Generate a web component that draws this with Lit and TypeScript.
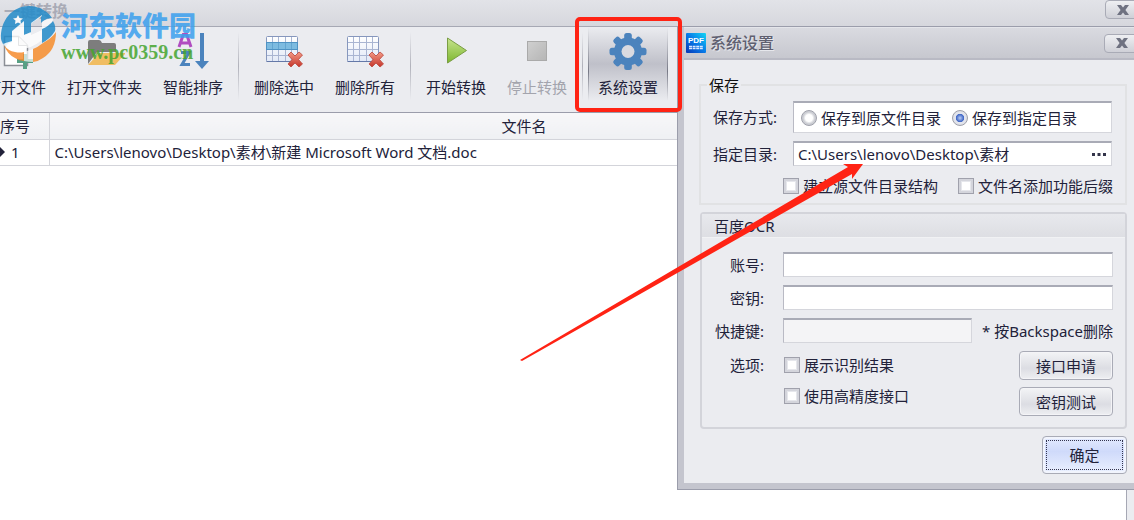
import { LitElement, html, css, svg } from "lit";
import { customElement } from "lit/decorators.js";

const fontStack = css`"Noto Sans", "Noto Sans CJK SC", sans-serif`;

const closeGlyph = html`<svg width="12" height="10" viewBox="0 0 12 10" aria-hidden="true">
  <path d="M0 0h4l2 2.6L8 0h4L8.4 5 12 10H8L6 7.4 4 10H0l3.6-5z" fill="#6f7281" />
</svg>`;

const grid = (selected: boolean) => html`<svg width="40" height="36" viewBox="0 0 40 36" aria-hidden="true">
  <defs>
    <linearGradient id="g" x2="0" y2="1"><stop stop-color="#fff" /><stop offset="1" stop-color="#e2e9f7" /></linearGradient>
    <linearGradient id="x" x2="0" y2="1"><stop stop-color="#f39a86" /><stop offset="1" stop-color="#c5352a" /></linearGradient>
  </defs>
  <rect x="2.5" y="3.5" width="31" height="25" rx="1" fill="url(#g)" stroke="#8697bd" />
  <path d="M8.500 4v24M14.500 4v24M21.500 4v24M27.500 4v24M3 9.500h30M3 16.500h30M3 22.500h30" stroke="#a9b5d2" />
  ${selected
    ? svg`<rect x="2.500" y="9.500" width="31" height="7" fill="#7dbbe0" stroke="#4f93c4"/><path d="M8.500 10v6M14.500 10v6M21.500 10v6M27.500 10v6" stroke="#63a5d0"/>`
    : ""}
  <path d="M2.500 28.500h31" stroke="#6478a8" />
  <path d="M24 22l3-3 4 4 4-4 3.500 3-4 4.500 4 4.500-3.500 3-4-4-4 4-3-3 4-4.500z" fill="url(#x)" stroke="#ba473d" stroke-width=".8" stroke-linejoin="round" />
</svg>`;

const icons = {
  file: html`<svg width="40" height="36" viewBox="0 0 40 36" aria-hidden="true">
    <path d="M8.500 3.500h14l9 9v20h-23z" fill="#fff" stroke="#8b8f96" stroke-width="1.500" />
    <path d="M22.500 3.500v9h9" fill="#eee" stroke="#8b8f96" />
    <path d="M21 26h16v4H21z" fill="#58a085" /><path d="M27 21h4v15h-4z" fill="#58a085" />
  </svg>`,
  folder: html`<svg width="40" height="36" viewBox="0 0 40 36" aria-hidden="true">
    <path d="M3 31V9q0-2 2-2h9q2 0 3 3h12q2 0 2 2v7H12z" fill="#7d7d7d" />
    <path d="M14 20h27l-11 12H3z" fill="#f0bd63" />
  </svg>`,
  sort: html`<svg width="40" height="36" viewBox="0 0 40 36" aria-hidden="true">
    <path d="M6 14L10.500 1h3L18 14M8 10h8" fill="none" stroke="#b04cc0" stroke-width="3" />
    <path d="M8 19.500h8L9 31.500h8" fill="none" stroke="#4b83bd" stroke-width="3" />
    <path d="M27 0h4v28h5l-7 8-7-8h5z" fill="#4b83bd" />
  </svg>`,
  deleteSelected: grid(true),
  deleteAll: grid(false),
  start: html`<svg width="40" height="36" viewBox="0 0 40 36" aria-hidden="true">
    <defs><linearGradient id="p" x2="0" y2="1"><stop stop-color="#c7e48e" /><stop offset="1" stop-color="#7db72f" /></linearGradient></defs>
    <path d="M11.500 5l19 12.500-19 12.500z" fill="url(#p)" stroke="#7a9d45" stroke-linejoin="round" />
  </svg>`,
  stop: html`<svg width="40" height="36" viewBox="0 0 40 36" aria-hidden="true">
    <defs><linearGradient id="s" x2="1" y2="1"><stop stop-color="#d0d0d0" /><stop offset="1" stop-color="#b5b5b5" /></linearGradient></defs>
    <rect x="10.500" y="8.500" width="19" height="19" fill="url(#s)" stroke="#aaa" />
  </svg>`,
  gear: html`<svg width="40" height="38" viewBox="0 0 40 38" aria-hidden="true">
    <g transform="translate(20 18.500)" fill="#4b83bd">
      ${[0, 45, 90, 135].map(
        (a) => svg`<rect x="-3.800" y="-18.500" width="7.600" height="37" rx="2.500" transform="rotate(${a})"/>`
      )}
      <circle r="14" />
      <circle r="6.500" fill="#d9dae0" />
    </g>
  </svg>`,
};

@customElement("settings-dialog")
export class SettingsDialog extends LitElement {
  static styles = css`
    :host {
      display: block;
      box-sizing: border-box;
      border: solid #c4c5ce;
      border-width: 0 0 6px 6px;
      outline: 1px solid #9b9dab;
      background: #ebecf0;
      color: #22223a;
      font: 15px/20px ${fontStack};
    }
    * { box-sizing: border-box; }
    button, input { font: inherit; color: inherit; margin: 0; }
    .title {
      display: flex;
      align-items: center;
      gap: 4px;
      height: 33px;
      padding-left: 2px;
      overflow: hidden;
      border-top: 1px solid #e4e5ea;
      border-bottom: 2px solid #b9bac4;
      background: linear-gradient(#d9dae0, #c7c8cf);
    }
    .title h1 {
      flex: 1;
      margin: 0;
      font-size: 16px;
      font-weight: 500;
      color: #5f6070;
      text-shadow: 1px 1px #e6e7ec;
    }
    .logo { display: block; }
    .close {
      flex: none;
      width: 36px;
      height: 19px;
      margin-right: -6px;
      padding: 0;
      display: grid;
      place-items: center;
      border: 1px solid #a9abb6;
      border-radius: 4px;
      background: linear-gradient(#eeeff2, #cfd0d7);
    }
    .body { padding: 15px 7px 9px 15px; }
    .group { margin: 0; border: 2px solid #e1e2e4; min-width: 0; }
    .save { padding: 6px 13px 7px 12px; }
    .save legend { padding: 0 2px; margin-left: -6px; color: #111; }
    .row { display: grid; align-items: center; grid-template-columns: 80px 1fr; }
    .radios {
      display: flex;
      align-items: center;
      gap: 11px;
      height: 32px;
      padding-left: 7px;
    }
    .radios, .field {
      width: 100%;
      min-width: 0;
      border: 1px solid #d5d6dc;
      border-top: 2px solid #a9abb6;
      border-left-color: #b9bac4;
      border-radius: 0;
      background: #fff;
      outline: 0;
    }
    .field { height: 25px; padding: 0 5px; }
    .field:disabled { background: #f4f4f6; }
    .path { display: grid; grid-template-columns: 1fr 22px; padding: 0; }
    .path input { min-width: 0; border: 0; padding: 0 4px; background: none; outline: 0; }
    .more { border: 0; padding: 0 2px 0 0; background: none; display: grid; place-items: center; }
    .target { margin-top: 8px; }
    .choice { display: flex; align-items: center; gap: 4px; white-space: nowrap; }
    .choice input { appearance: none; width: 16px; height: 16px; flex: none; }
    .choice input[type="checkbox"] {
      border: 1px solid #a0a1ac;
      background: #fff;
      box-shadow: inset 0 0 0 2px #d4d5dc, inset 0 0 0 3px #e6e7ec;
    }
    .choice input[type="radio"] {
      border: 1px solid #9ea0aa;
      border-radius: 50%;
      background: radial-gradient(#fff 35%, #c9cbd1 60%, #dfe0e5);
    }
    .choice input[type="radio"]:checked {
      background: radial-gradient(circle, #b9cdf5, #3f66c5 38%, #e6e8ef 46%, #d2d4dc);
    }
    .checks { display: flex; justify-content: space-between; margin: 10px -1px 0 70px; }
    .ocr { margin-top: 7px; margin-left: 1px; border-color: #d3d4da; border-radius: 4px; }
    .ocr h2 {
      margin: 0;
      padding: 0 12px;
      height: 24px;
      font: inherit;
      line-height: 24px;
      background: linear-gradient(#e8e9ed, #dddee3);
      border-bottom: 1px solid #f1f2f4;
    }
    .form { display: grid; grid-template-columns: 50px 1fr; column-gap: 19px; row-gap: 8px; padding: 14px 12px 11px; align-items: center; }
    .form > label, .form > .caption { text-align: right; white-space: nowrap; }
    .shortcut { display: grid; grid-template-columns: 1fr auto; column-gap: 10px; align-items: center; white-space: nowrap; }
    .options { display: flex; justify-content: space-between; padding-left: 1px; }
    .stack { display: grid; gap: 11px; align-content: start; padding-top: 4px; }
    .pushes { display: grid; gap: 7px; width: 94px; }
    .form > .caption { align-self: start; line-height: 29px; }
    .push {
      height: 29px;
      padding: 0;
      border: 1px solid #a9abb6;
      border-radius: 4px;
      background: linear-gradient(#f3f4f6, #dcdde3 60%, #eeeff2);
      box-shadow: inset 0 0 0 1px #f4f4f7;
    }
    .actions { display: flex; justify-content: flex-end; margin-top: 7px; }
    .ok {
      width: 85px;
      height: 38px;
      padding: 3px;
      border: 1px solid #a9abb6;
      border-radius: 4px;
      background: linear-gradient(#e4ebff, #cfdafa 40%, #eaf0ff);
      box-shadow: inset 0 0 0 2px #f1f4fd;
    }
    .ok span { display: block; line-height: 28px; border: 1px dotted #33344f; }
  `;

  render() {
    return html`
      <header class="title">
        <svg class="logo" width="20" height="20" viewBox="0 0 20 20" aria-hidden="true">
          <defs><linearGradient id="l" x1="1" x2="0" y2="1"><stop stop-color="#12d6f4" /><stop offset=".5" stop-color="#087be8" /><stop offset="1" stop-color="#0636b5" /></linearGradient></defs>
          <rect width="20" height="20" rx="1" fill="url(#l)" />
          <text x="10" y="10" text-anchor="middle" font-family="Liberation Sans" font-size="8" font-weight="700" fill="#fff">PDF</text>
          <path d="M3 13.500h14M3 15.500h14" stroke="#d8e8ff" stroke-width="1.500" stroke-dasharray="3 .6" />
        </svg>
        <h1>系统设置</h1>
        <button class="close" aria-label="关闭">${closeGlyph}</button>
      </header>
      <div class="body">
        <fieldset class="group save">
          <legend>保存</legend>
          <div class="row">
            <span id="mode">保存方式:</span>
            <div class="radios" role="radiogroup" aria-labelledby="mode">
              <label class="choice"><input type="radio" name="mode" />保存到原文件目录</label>
              <label class="choice"><input type="radio" name="mode" checked />保存到指定目录</label>
            </div>
          </div>
          <div class="row target">
            <label for="dir">指定目录:</label>
            <div class="field path">
              <input id="dir" type="text" .value=${"C:\\Users\\lenovo\\Desktop\\素材"} />
              <button class="more" aria-label="浏览">
                <svg width="14" height="3" viewBox="0 0 14 3" aria-hidden="true"><path d="M0 0h3v3H0zM5.500 0h3v3h-3zM11 0h3v3h-3z" fill="#33344a" /></svg>
              </button>
            </div>
          </div>
          <div class="checks">
            <label class="choice"><input type="checkbox" />建立源文件目录结构</label>
            <label class="choice"><input type="checkbox" />文件名添加功能后缀</label>
          </div>
        </fieldset>

        <section class="group ocr">
          <h2>百度OCR</h2>
          <div class="form">
            <label for="account">账号:</label>
            <input class="field" id="account" type="text" />
            <label for="secret">密钥:</label>
            <input class="field" id="secret" type="text" />
            <label for="hotkey">快捷键:</label>
            <div class="shortcut">
              <input class="field" id="hotkey" type="text" disabled />
              <span>* 按Backspace删除</span>
            </div>
            <span class="caption">选项:</span>
            <div class="options">
              <div class="stack">
                <label class="choice"><input type="checkbox" />展示识别结果</label>
                <label class="choice"><input type="checkbox" />使用高精度接口</label>
              </div>
              <div class="pushes">
                <button class="push">接口申请</button>
                <button class="push">密钥测试</button>
              </div>
            </div>
          </div>
        </section>
        <div class="actions"><button class="ok"><span>确定</span></button></div>
      </div>
    `;
  }
}

@customElement("app-root")
export class AppRoot extends LitElement {
  static styles = css`
    :host {
      display: flex;
      flex-direction: column;
      position: relative;
      min-height: 100vh;
      overflow: hidden;
      background: #fff;
      color: #22223a;
      font: 15px/20px ${fontStack};
    }
    * { box-sizing: border-box; }
    .title {
      display: flex;
      justify-content: space-between;
      align-items: flex-start;
      height: 27px;
      padding-left: 4px;
      background: linear-gradient(#e2e3e8, #d6d7dd);
      border-bottom: 1px solid #a6a8b4;
    }
    .title h1 { margin: 0; font-size: 16px; line-height: 22px; font-weight: 700; color: #a9abb6; }
    .close {
      width: 36px;
      height: 19px;
      margin-right: -7px;
      padding: 0;
      display: grid;
      place-items: center;
      border: 1px solid #a9abb6;
      border-radius: 4px;
      background: linear-gradient(#eeeff2, #cfd0d7);
    }
    .toolbar {
      display: flex;
      gap: 1px;
      height: 86px;
      margin-left: -24px;
      background: #ebecf0;
      border-bottom: 1px solid #9b9dab;
    }
    .tool {
      flex: none;
      display: flex;
      flex-direction: column;
      align-items: center;
      justify-content: space-between;
      height: 74px;
      padding: 6px 10px 4px;
      border: 0;
      background: none;
      font: inherit;
      color: inherit;
      position: relative;
      white-space: nowrap;
    }
    .tool:disabled { color: #a3a4ad; }
    .active {
      background:
        linear-gradient(#ebecf0, #777986 60%, #ebecf0) left / 1px 100% no-repeat,
        linear-gradient(#ebecf0, #777986 60%, #ebecf0) right / 1px 100% no-repeat,
        linear-gradient(#ebecf0, #bfc0c9 50%, #ebecf0);
    }
    .active::after {
      content: "";
      position: absolute;
      inset: -10px -14px -11px -13px;
      border: 4px solid #ff2314;
      border-radius: 5px;
      z-index: 3;
    }
    .sep { width: 1px; margin: 5px 4px 12px; background: linear-gradient(#ebecf0, #b1b2bb, #ebecf0); }
    .content { flex: 1; border-right: 7px solid #ebecf0; box-shadow: inset -1px 0 #a6a8b4; }
    .list { width: 100%; border-collapse: collapse; table-layout: fixed; }
    .list th { height: 26px; padding: 0; font-weight: 400; background: linear-gradient(#f7f7f9, #eff0f3); }
    .list td { height: 26px; padding: 0 5px; background: #fff; }
    .list th, .list td { border: solid #d3d4da; border-width: 0 1px 1px 0; line-height: 20px; }
    .number { width: 49px; text-align: left; }
    .name { width: 950px; }
    .list .current { padding: 0; }
    .current span { display: flex; align-items: center; gap: 6px; }
    .dialog { position: absolute; top: 27px; right: 0; width: 456px; z-index: 2; }
    .arrow { position: absolute; top: 163px; right: 271px; z-index: 3; pointer-events: none; }
    .watermark {
      position: absolute;
      top: 5px;
      left: 0;
      z-index: 4;
      display: flex;
      gap: 5px;
      align-items: flex-start;
      pointer-events: none;
      opacity: 0.85;
    }
    .site { margin: 0; color: #3ba0ee; font: 900 27px/39px "Noto Sans CJK SC", sans-serif; }
    .url { display: block; color: #45a530; font: 700 20px/16px "Liberation Serif", serif; }
  `;

  render() {
    return html`
      <header class="title">
        <h1>一键转换</h1>
        <button class="close" aria-label="关闭">${closeGlyph}</button>
      </header>
      <nav class="toolbar">
        <button class="tool">${icons.file}<span>打开文件</span></button>
        <button class="tool">${icons.folder}<span>打开文件夹</span></button>
        <button class="tool">${icons.sort}<span>智能排序</span></button>
        <span class="sep"></span>
        <button class="tool">${icons.deleteSelected}<span>删除选中</span></button>
        <button class="tool">${icons.deleteAll}<span>删除所有</span></button>
        <span class="sep"></span>
        <button class="tool">${icons.start}<span>开始转换</span></button>
        <button class="tool" disabled>${icons.stop}<span>停止转换</span></button>
        <span class="sep"></span>
        <button class="tool active">${icons.gear}<span>系统设置</span></button>
      </nav>
      <main class="content">
        <table class="list">
          <thead>
            <tr><th class="number">序号</th><th class="name">文件名</th><th></th></tr>
          </thead>
          <tbody>
            <tr>
              <td class="current"><span><svg width="5" height="10" viewBox="0 0 5 10" aria-hidden="true"><path d="M0 0l5 5-5 5z" fill="#22223a" /></svg>1</span></td>
              <td>C:\\Users\\lenovo\\Desktop\\素材\\新建 Microsoft Word 文档.doc</td>
              <td></td>
            </tr>
          </tbody>
        </table>
      </main>
      <settings-dialog class="dialog" role="dialog" aria-label="系统设置"></settings-dialog>
      <svg class="arrow" width="343" height="199" viewBox="0 0 343 199" aria-hidden="true">
        <path d="M0 197L328 4l-5-3h20l-11 15v-5L2 198z" fill="#ff2314" />
      </svg>
      <div class="watermark">
        <svg width="56" height="58" viewBox="0 0 56 58" aria-hidden="true">
          <path d="M1 34C0 16 12 1 29 1c10 0 19 5 23 12-5 0-9 3-11 5V11L31 19v9l-7 2V17L12 27v10q-5 1-6 5Q2 39 1 34z" fill="#238bc9" />
          <path d="M53 14c-4-1-8 1-11 3v8l-11 5v-11l11-8V10L31 18v9l-7 3V16L12 26v10q-7 2-9 3c4 6 12 7 21 5 14-3 27-14 29-30z" fill="#fff" opacity=".9" />
          <path d="M42 24q7-3 11-8 3 5 2 10-5 8-13 12z" fill="#238bc9" />
          <path d="M4 40q4 6 11 7v6Q7 49 4 40zM15 47q5 1 9 0v9q-5 0-9-3zM33 44q5-2 10-6v15q-4 3-10 4zM43 38q9-5 13-11 0 18-13 26z" fill="#f68d2e" />
          <path d="M24 47v9q5 1 9 1V44z" fill="#fff" opacity=".8" />
          <path d="M18 10l1.500 3 3.500.5-2.500 2 .5 3.500-3-1.500-3 1.500.500-3.500-2.500-2 3.500-.5z" fill="#fff" />
        </svg>
        <div>
          <p class="site">河东软件园</p>
          <span class="url">www.pc0359.cn</span>
        </div>
      </div>
    `;
  }
}
